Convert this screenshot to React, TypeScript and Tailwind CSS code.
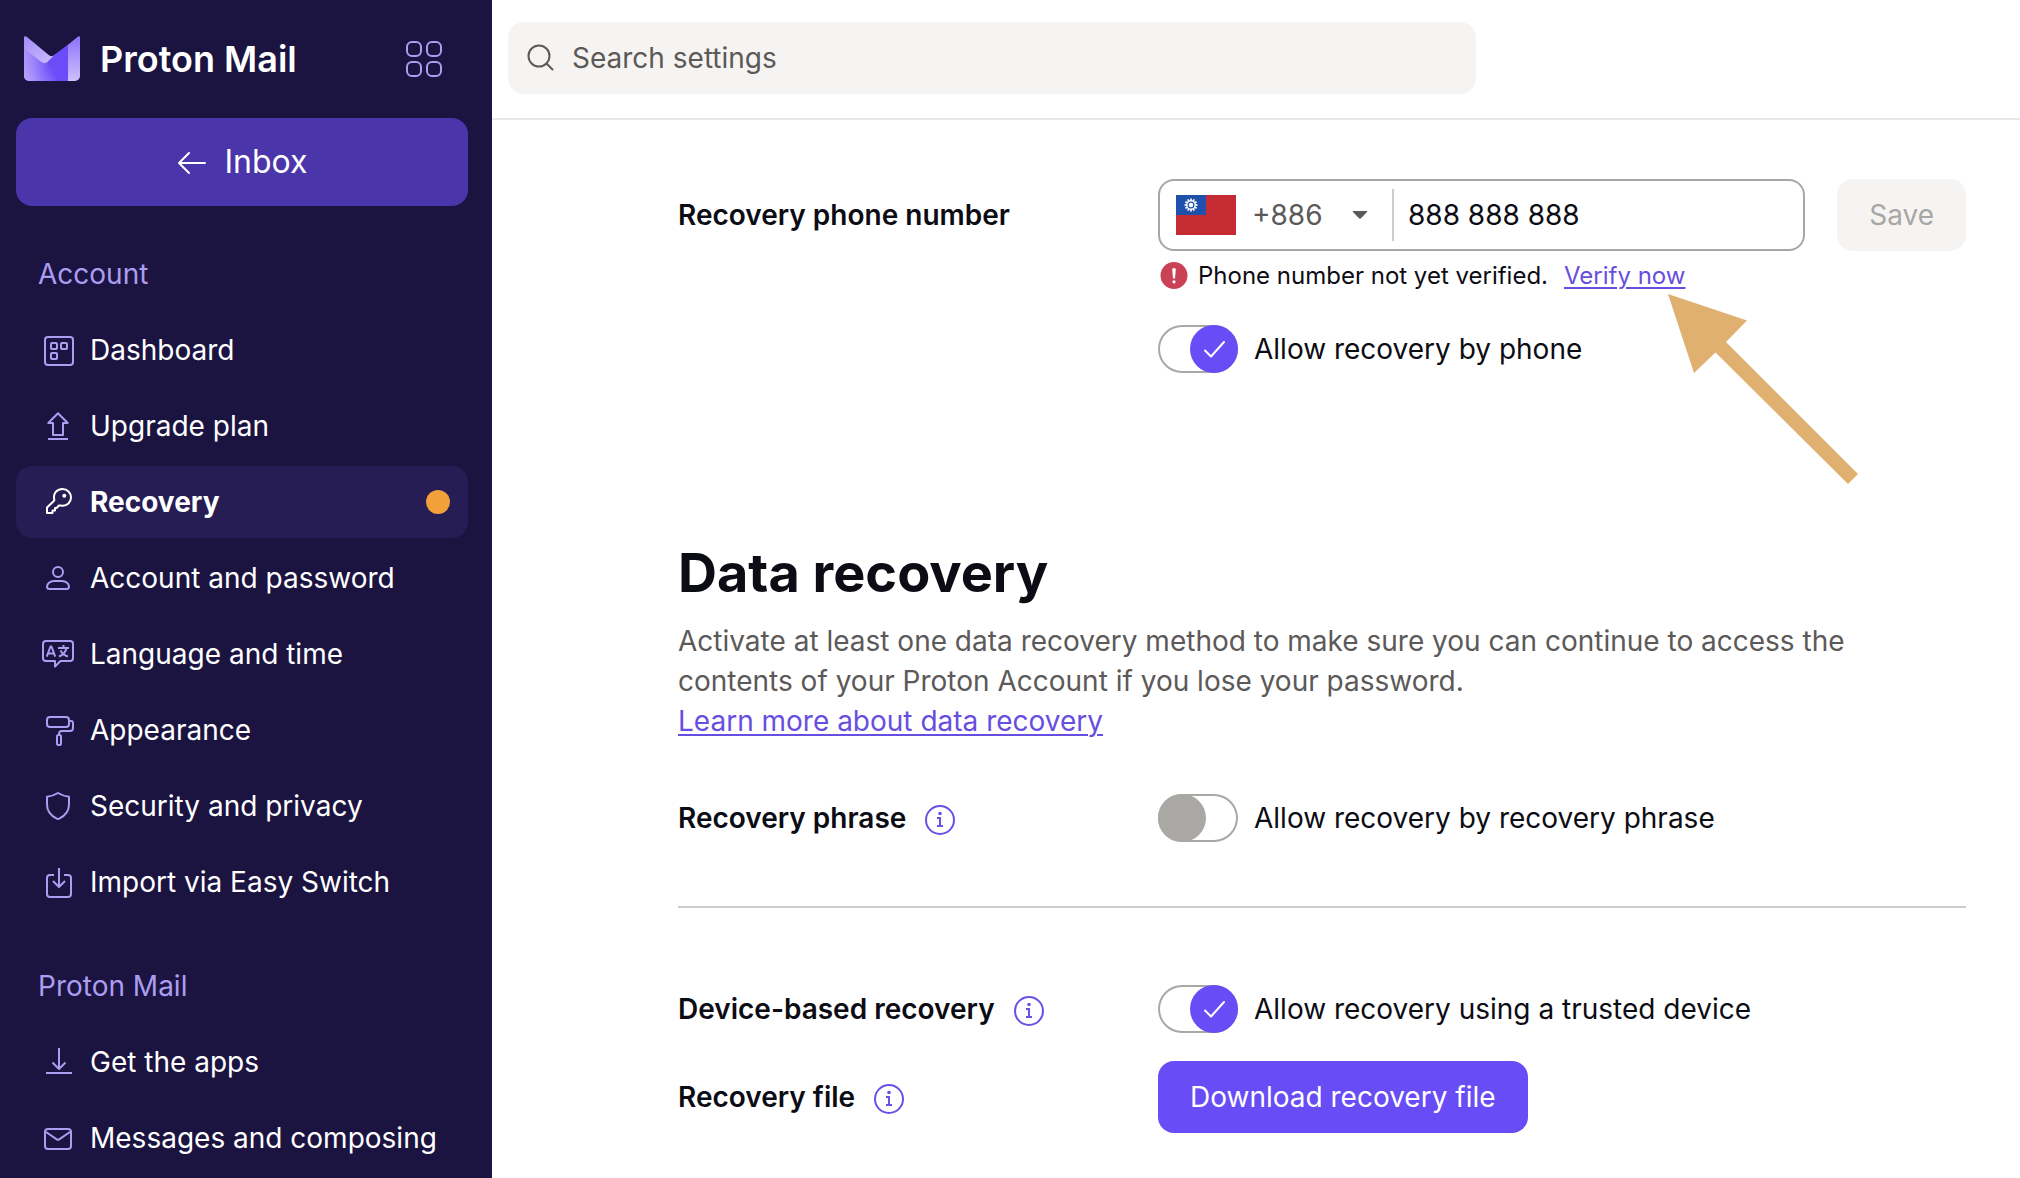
import { useState } from "react";
import type { ReactNode } from "react";

function Icon({ children }: { children: ReactNode }) {
  return (
    <svg viewBox="0 0 32 32" className="size-8 shrink-0" fill="none" stroke="currentColor" strokeWidth="2" strokeLinejoin="round" aria-hidden="true">
      {children}
    </svg>
  );
}

const DashboardIcon = (
  <Icon>
    <rect x="3" y="3" width="28" height="28" rx="3" />
    <rect x="9" y="9" width="6" height="6" rx="1" />
    <rect x="19" y="9" width="6" height="6" rx="1" />
    <rect x="9" y="19" width="6" height="6" rx="1" />
  </Icon>
);
const UpgradeIcon = (
  <Icon>
    <path d="M16 3.3 6.3 13H11v12h10V13h4.700z" />
    <path d="M6 29h20" />
  </Icon>
);
const KeyIcon = (
  <Icon>
    <path d="M12.300 13.500C10.800 8 14.500 3 20.500 3c4.800 0 8.500 3.700 8.500 8.500s-3.900 8.500-8.700 8.200c-1.400 0-2.500-.5-3.300-.2L14.500 22H13v2.500h-2.500V27H5v-5.500l6.600-6.300c.6-.5.800-1 .7-1.700z" />
    <circle cx="22.300" cy="9.800" r="2" fill="currentColor" stroke="none" />
  </Icon>
);
const UserIcon = (
  <Icon>
    <circle cx="16" cy="10" r="5" />
    <path d="M5 24.500C5 22 8 19 12 19h8c4 0 7 3 7 5.500 0 1.700-.8 2.500-2.500 2.500h-17C5.800 27 5 26.200 5 24.500z" />
  </Icon>
);
const LanguageIcon = (
  <Icon>
    <path d="M4 3h24a3 3 0 0 1 3 3v14a3 3 0 0 1-3 3H18.500L13 28.500V23H4a3 3 0 0 1-3-3V6a3 3 0 0 1 3-3z" />
    <path d="M4.800 18.700 8.500 8.500h1l3.700 10.200M6 15.500h6M16 10h11M21.500 7v3M24.500 10c-.7 3.500-3.500 7-7.500 8.500M18.500 12.500c1.500 2.800 4 5 7.500 6" />
  </Icon>
);
const AppearanceIcon = (
  <Icon>
    <rect x="5" y="3" width="22" height="10" rx="3" />
    <path d="M27.500 7H29a2 2 0 0 1 2 2v5a3 3 0 0 1-3 3h-8a3 3 0 0 0-3 3v1" />
    <rect x="15" y="21" width="4" height="10" rx="1.500" />
  </Icon>
);
const ShieldIcon = (
  <Icon>
    <path d="M16 3c3.300 2 6.800 3.200 11 3.800v7.700c0 6-4 11.300-9.800 14.200-.8.400-1.600.4-2.400 0C9 25.800 5 20.500 5 14.500V6.800C9.200 6.200 12.700 5 16 3z" />
  </Icon>
);
const ImportIcon = (
  <Icon>
    <path d="M12 9H8a3 3 0 0 0-3 3v16a3 3 0 0 0 3 3h18a3 3 0 0 0 3-3V12a3 3 0 0 0-3-3h-4" />
    <path d="M17 2v18.500M11 15l6 6 6-6" />
  </Icon>
);
const DownloadIcon = (
  <Icon>
    <path d="M17 2v20.500M10.500 16.500l6.500 6.500 6.500-6.500M4 27h26" />
  </Icon>
);
const EnvelopeIcon = (
  <Icon>
    <rect x="3" y="7" width="26" height="20" rx="3" />
    <path d="m4 10 10.800 7.300c.8.500 1.600.5 2.400 0L28 10" />
  </Icon>
);

type Item = { label: string; icon: ReactNode; active?: boolean };

const groups: { title: string; items: Item[] }[] = [
  {
    title: "Account",
    items: [
      { label: "Dashboard", icon: DashboardIcon },
      { label: "Upgrade plan", icon: UpgradeIcon },
      { label: "Recovery", icon: KeyIcon, active: true },
      { label: "Account and password", icon: UserIcon },
      { label: "Language and time", icon: LanguageIcon },
      { label: "Appearance", icon: AppearanceIcon },
      { label: "Security and privacy", icon: ShieldIcon },
      { label: "Import via Easy Switch", icon: ImportIcon },
    ],
  },
  {
    title: "Proton Mail",
    items: [
      { label: "Get the apps", icon: DownloadIcon },
      { label: "Messages and composing", icon: EnvelopeIcon },
    ],
  },
];

function Logo() {
  return (
    <svg viewBox="0 0 56 46" className="h-[46px] w-14 shrink-0" aria-hidden="true">
      <defs>
        <linearGradient id="logo-body" x1="38" y1="34" x2="4" y2="14" gradientUnits="userSpaceOnUse">
          <stop offset="0" stopColor="#6a4cf8" />
          <stop offset="0.350" stopColor="#6c50f8" />
          <stop offset="1" stopColor="#9c86fb" />
        </linearGradient>
        <linearGradient id="logo-corner" x1="26" y1="30" x2="2" y2="46" gradientUnits="userSpaceOnUse">
          <stop offset="0" stopColor="#b7a4fb" stopOpacity="0" />
          <stop offset="1" stopColor="#b7a4fb" />
        </linearGradient>
        <linearGradient id="logo-flap" x1="2" y1="2" x2="26" y2="28" gradientUnits="userSpaceOnUse">
          <stop offset="0" stopColor="#a48dfb" />
          <stop offset="1" stopColor="#cbbdfb" />
        </linearGradient>
        <linearGradient id="logo-side" x1="50" y1="2" x2="50" y2="45" gradientUnits="userSpaceOnUse">
          <stop offset="0" stopColor="#8f75fa" />
          <stop offset="1" stopColor="#cdc1fb" />
        </linearGradient>
      </defs>
      <path d="M0 12 20 26 44 9v36H5a5 5 0 0 1-5-5z" fill="url(#logo-body)" />
      <path d="M0 12 20 26 44 9v36H5a5 5 0 0 1-5-5z" fill="url(#logo-corner)" />
      <path d="M0 0.800Q1-.3 3 1l22 18.200q3 1.800 5.500.300L24 25.500q-3.500 3-7 .300L0 12.500z" fill="url(#logo-flap)" />
      <path d="m24 25.500 6.500-6L44 8.500V30H24z" fill="#6a4cf8" />
      <path d="M44 8.800 53.500 1Q55-.3 56 .8V40a5 5 0 0 1-5 5h-7z" fill="url(#logo-side)" />
    </svg>
  );
}

function Sidebar() {
  return (
    <aside className="flex w-[492px] shrink-0 flex-col bg-[#1b1340] px-4 pt-[31px] pr-6">
      <div className="flex h-[55px] items-center pr-[26px] pl-2">
        <Logo />
        <span className="ml-5 text-[36px] leading-[46px] font-semibold whitespace-nowrap text-white">Proton Mail</span>
        <button type="button" aria-label="Proton applications" className="ml-auto text-[#ab9df0]">
          <svg viewBox="0 0 36 36" className="size-9" fill="none" stroke="currentColor" strokeWidth="2" aria-hidden="true">
            <rect x="1" y="1" width="14" height="14" rx="5" />
            <rect x="21" y="1" width="14" height="14" rx="5" />
            <rect x="1" y="21" width="14" height="14" rx="5" />
            <rect x="21" y="21" width="14" height="14" rx="5" />
          </svg>
        </button>
      </div>
      <a href="#inbox" className="mt-8 flex h-[88px] items-center justify-center gap-4 rounded-2xl bg-[#4a35aa] text-[32px] text-white">
        <svg viewBox="0 0 32 32" className="size-8" fill="none" stroke="currentColor" strokeWidth="2" strokeLinecap="round" strokeLinejoin="round" aria-hidden="true">
          <path d="M3 17h26M13 7 3 17l10 10" />
        </svg>
        Inbox
      </a>
      <nav className="mt-8 flex flex-col">
        {groups.map((group) => (
          <section key={group.title} className="mb-8">
            <h2 className="flex h-[72px] items-center px-[22px] text-[#ab9df0]">{group.title}</h2>
            <ul className="mt-1 flex flex-col gap-1">
              {group.items.map((item) => (
                <li key={item.label}>
                  <a
                    href="#settings"
                    aria-current={item.active ? "page" : undefined}
                    className={
                      item.active
                        ? "flex h-[72px] items-center gap-4 rounded-2xl bg-[#271d55] pr-4 pl-[26px] font-bold text-white"
                        : "flex h-[72px] items-center gap-4 rounded-2xl pr-4 pl-[26px] text-white"
                    }
                  >
                    <span className={item.active ? "text-white" : "text-[#ab9df0]"}>{item.icon}</span>
                    <span className="whitespace-nowrap">{item.label}</span>
                    {item.active && <span className="mr-0.5 ml-auto size-6 rounded-full bg-[#f2a03a]" />}
                  </a>
                </li>
              ))}
            </ul>
          </section>
        ))}
      </nav>
    </aside>
  );
}

function Toggle({ id, label, initial }: { id: string; label: string; initial: boolean }) {
  const [on, setOn] = useState(initial);
  return (
    <label htmlFor={id} className="flex h-12 w-fit cursor-pointer items-center gap-4">
      <input id={id} type="checkbox" role="switch" className="sr-only" checked={on} onChange={() => setOn(!on)} />
      <span className={on ? "flex h-12 w-20 justify-end rounded-full shadow-[inset_0_0_0_2px_#a9a8a5]" : "flex h-12 w-20 rounded-full shadow-[inset_0_0_0_2px_#a9a8a5]"}>
        <span className={on ? "flex size-12 items-center justify-center rounded-full bg-[#684cf6]" : "size-12 rounded-full bg-[#a9a8a4]"}>
          {on && (
            <svg viewBox="0 0 24 24" className="size-6" fill="none" stroke="white" strokeWidth="2" strokeLinecap="round" strokeLinejoin="round" aria-hidden="true">
              <path d="m3 13.500 6 6L22 5" />
            </svg>
          )}
        </span>
      </span>
      {label}
    </label>
  );
}

function InfoButton({ label }: { label: string }) {
  return (
    <button type="button" aria-label={label} className="mt-1 text-[#6a50e6]">
      <svg viewBox="0 0 32 32" className="size-8" fill="none" stroke="currentColor" strokeWidth="2" aria-hidden="true">
        <circle cx="16" cy="16" r="14" />
        <circle cx="16" cy="9.500" r="1.800" fill="currentColor" stroke="none" />
        <path d="M13 14h3v8M13 22h6" />
      </svg>
    </button>
  );
}

function Flag() {
  return (
    <svg viewBox="0 0 60 40" className="h-10 w-[60px] shrink-0" aria-hidden="true">
      <rect width="60" height="40" fill="#c52b33" />
      <rect width="30" height="20" fill="#1f50ac" />
      <g stroke="white" strokeWidth="1.700">
        {[0, 30, 60, 90, 120, 150].map((angle) => (
          <path key={angle} d="M15 3.500v13" transform={`rotate(${angle} 15 10)`} />
        ))}
      </g>
      <circle cx="15" cy="10" r="4.800" fill="white" />
      <circle cx="15" cy="10" r="2.900" fill="white" stroke="#1f50ac" strokeWidth="1.200" />
    </svg>
  );
}

export default function App() {
  const [phone, setPhone] = useState("888 888 888");
  return (
    <div className="flex min-h-screen bg-white font-['Inter',sans-serif] text-[28px] leading-10 text-[#0c0c14]">
      <Sidebar />
      <div className="min-w-0 flex-1">
        <header className="flex h-[120px] items-start border-b-2 border-[#e9e7e5] px-4 pt-[22px]">
          <label htmlFor="search" className="flex h-[72px] w-full max-w-[968px] items-center gap-[18px] rounded-2xl bg-[#f5f4f2] px-[18px] text-[#5c5958]">
            <svg viewBox="0 0 28 28" className="size-7 shrink-0" fill="none" stroke="currentColor" strokeWidth="2" strokeLinecap="round" aria-hidden="true">
              <circle cx="13" cy="12" r="10.500" />
              <path d="m20.500 19.500 6 6" />
            </svg>
            <input id="search" type="search" placeholder="Search settings" className="min-w-0 flex-1 bg-transparent outline-none placeholder:text-[#5c5958]" />
          </label>
        </header>
        <main className="pr-[54px] pb-10 pl-[186px]">
          <section className="grid grid-cols-[480px_minmax(0,1fr)] pt-[59px]">
            <label htmlFor="phone" className="flex h-[72px] items-center font-semibold">
              Recovery phone number
            </label>
            <div>
              <div className="flex gap-8">
                <div className="flex h-[72px] min-w-0 flex-1 items-center rounded-2xl border-2 border-[#a9a7a4] pl-4">
                  <Flag />
                  <div className="relative ml-4 flex items-center">
                    <select aria-label="Country code" className="w-[126px] appearance-none bg-transparent text-[#5c5958] outline-none">
                      <option>+886</option>
                    </select>
                    <svg viewBox="0 0 16 8" className="pointer-events-none absolute right-2.5 h-2 w-4" fill="#5c5958" aria-hidden="true">
                      <path d="M1.500 0h13q1.500 0 .5 1L9 7.300q-1 .9-2 0L1 1q-1-1 .5-1z" />
                    </svg>
                  </div>
                  <span className="ml-3.5 h-[52px] w-0.5 bg-[#cdcccb]" />
                  <input
                    id="phone"
                    type="tel"
                    value={phone}
                    onChange={(event) => setPhone(event.target.value)}
                    className="ml-3.5 min-w-0 flex-1 bg-transparent outline-none"
                  />
                </div>
                <button type="button" disabled className="h-[72px] rounded-2xl bg-[#f5f4f2] px-8 text-[#a9a7a4]">
                  Save
                </button>
              </div>
              <div className="mt-[5px] flex h-10 items-center text-[24px]">
                <svg viewBox="0 0 28 28" className="ml-0.5 size-7 shrink-0" aria-hidden="true">
                  <circle cx="14" cy="13.500" r="13.500" fill="#ca4256" />
                  <path d="M12.200 7.500Q12.200 6 14 6t1.800 1.500L15 16.500h-2z" fill="white" />
                  <circle cx="14" cy="19.800" r="1.600" fill="white" />
                </svg>
                <span className="ml-2.5 whitespace-nowrap">Phone number not yet verified.</span>
                <span className="relative ml-4">
                  <a href="#verify" className="whitespace-nowrap text-[#684ee0] underline decoration-2 underline-offset-3">
                    Verify now
                  </a>
                  <svg viewBox="0 0 190 191" className="pointer-events-none absolute top-[38px] left-[104px] h-[191px] w-[190px] max-w-none" fill="#e0b070" aria-hidden="true">
                    <path d="M0 0 79 26.500 58 48 190 180l-10 10L47.500 58.500 26 79z" />
                  </svg>
                </span>
              </div>
              <div className="mt-[29px]">
                <Toggle id="by-phone" label="Allow recovery by phone" initial />
              </div>
            </div>
          </section>

          <section className="pt-[160px]">
            <h1 className="text-[54px] leading-[80px] font-bold">Data recovery</h1>
            <p className="mt-2 max-w-[1200px] text-[#5c5958]">
              Activate at least one data recovery method to make sure you can continue to access the contents of your Proton Account if you lose your password.
            </p>
            <a href="#learn" className="text-[#684ee0] underline decoration-2 underline-offset-3">
              Learn more about data recovery
            </a>

            <div className="mt-[53px] grid grid-cols-[480px_minmax(0,1fr)] items-center">
              <div className="flex items-center gap-[18px] font-semibold">
                Recovery phrase
                <InfoButton label="About the recovery phrase" />
              </div>
              <Toggle id="by-phrase" label="Allow recovery by recovery phrase" initial={false} />
            </div>
            <hr className="mt-16 border-t-2 border-[#cdcccb]" />
            <div className="mt-[77px] grid grid-cols-[480px_minmax(0,1fr)] items-center gap-y-7">
              <div className="flex items-center gap-[18px] font-semibold">
                Device-based recovery
                <InfoButton label="About device-based recovery" />
              </div>
              <Toggle id="by-device" label="Allow recovery using a trusted device" initial />
              <div className="flex items-center gap-[18px] font-semibold">
                Recovery file
                <InfoButton label="About the recovery file" />
              </div>
              <button type="button" className="h-[72px] w-fit rounded-2xl bg-[#684cf6] px-8 text-white">
                Download recovery file
              </button>
            </div>
          </section>
        </main>
      </div>
    </div>
  );
}
